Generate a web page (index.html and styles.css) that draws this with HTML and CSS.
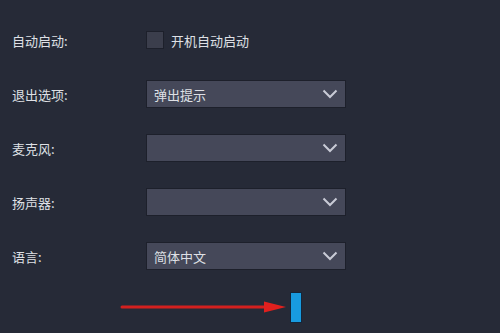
FILE: index.html
```html
<!DOCTYPE html>
<html lang="zh">
<head>
<meta charset="utf-8">
<link rel="stylesheet" href="styles.css">
</head>
<body>
<div class="panel">
  <div class="row">
    <div class="label">自动启动:</div>
    <div class="check"><span class="box"></span><span class="check-text">开机自动启动</span></div>
  </div>
  <div class="row">
    <div class="label">退出选项:</div>
    <div class="select"><span class="value">弹出提示</span><svg class="chev" viewBox="0 0 16 10" width="16" height="10"><path d="M1.5 1.5 L8 8 L14.5 1.5" fill="none" stroke="#c9cbd6" stroke-width="2"/></svg></div>
  </div>
  <div class="row">
    <div class="label">麦克风:</div>
    <div class="select"><span class="value"></span><svg class="chev" viewBox="0 0 16 10" width="16" height="10"><path d="M1.5 1.5 L8 8 L14.5 1.5" fill="none" stroke="#c9cbd6" stroke-width="2"/></svg></div>
  </div>
  <div class="row">
    <div class="label">扬声器:</div>
    <div class="select"><span class="value"></span><svg class="chev" viewBox="0 0 16 10" width="16" height="10"><path d="M1.5 1.5 L8 8 L14.5 1.5" fill="none" stroke="#c9cbd6" stroke-width="2"/></svg></div>
  </div>
  <div class="row">
    <div class="label">语言:</div>
    <div class="select"><span class="value">简体中文</span><svg class="chev" viewBox="0 0 16 10" width="16" height="10"><path d="M1.5 1.5 L8 8 L14.5 1.5" fill="none" stroke="#c9cbd6" stroke-width="2"/></svg></div>
  </div>
  <div class="bottom">
    <svg class="arrow" viewBox="0 0 166 14" width="166" height="14"><line x1="2" y1="7" x2="148" y2="7" stroke="#d3201f" stroke-width="3" stroke-linecap="round"/><path d="M144 1.5 L166 7 L144 12.5 Z" fill="#e0201e"/></svg>
    <div class="bar"></div>
  </div>
</div>
</body>
</html>
```
FILE: styles.css
```css
html, body {
  margin: 0;
  padding: 0;
  background: #262a37;
  width: 500px;
  height: 333px;
  overflow: hidden;
}
body {
  font-family: "Noto Sans CJK SC", "Noto Sans", sans-serif;
  font-size: 13px;
  color: #dfe0e5;
}
.panel {
  padding-top: 13px;
  padding-left: 12px;
}
.row {
  height: 54px;
  display: flex;
  align-items: center;
}
.label {
  width: 134px;
  flex: none;
}
.check {
  display: flex;
  align-items: center;
  gap: 7px;
}
.box {
  width: 16px;
  height: 16px;
  background: #3b3e4c;
  border: 1px solid #1d202b;
}
.select {
  box-sizing: border-box;
  width: 200px;
  height: 28px;
  background: #454859;
  border: 1px solid #1d202b;
  display: flex;
  align-items: center;
  justify-content: space-between;
  padding: 0 7px 0 7px;
}
.chev {
  display: block;
}
.bottom {
  margin-top: 9px;
  height: 30px;
  display: flex;
  align-items: center;
  padding-left: 108px;
}
.arrow {
  display: block;
}
.bar {
  margin-left: 4px;
  box-sizing: border-box;
  width: 12px;
  height: 31px;
  background: #189be0;
  border: 1px solid #15263a;
}
```
